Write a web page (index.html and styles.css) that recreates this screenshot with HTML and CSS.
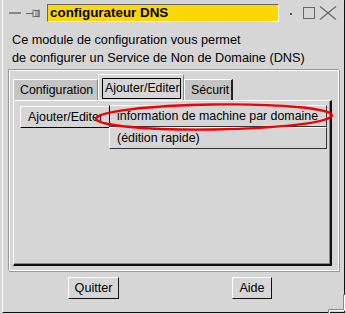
FILE: index.html
```html
<!DOCTYPE html>
<html lang="fr">

<head>
    <meta charset="UTF-8">
    <title>configurateur DNS</title>
    <link rel="stylesheet" href="styles.css">
</head>

<body>
    <div class="window">
        <div class="titlebar">
            <span class="tb-min"></span>
            <svg class="tb-pin" width="16" height="10" viewBox="0 0 16 10">
                <path d="M0 5.5h7M7 1.5v8M8 2.5h5v6h-5M13 1.5v8" stroke="#666" stroke-width="1" fill="none"/>
                <rect x="9" y="3" width="3" height="5" fill="#aaa"/>
            </svg>
            <div class="title">configurateur DNS</div>
            <span class="tb-dot"></span>
            <span class="tb-max"></span>
            <svg class="tb-close" width="18" height="14" viewBox="0 0 18 14">
                <path d="M1 0.5l16 13M17 0.5l-16 13" stroke="#666" stroke-width="1.2" fill="none"/>
            </svg>
        </div>

        <div class="intro">
            Ce module de configuration vous permet<br>
            de configurer un Service de Non de Domaine (DNS)
        </div>

        <div class="frame">
            <div class="tabs">
                <div class="tab first">Configuration</div>
                <div class="tab active"><span class="focus">Ajouter/Editer</span></div>
                <div class="tab last">Sécurit</div>
            </div>
            <div class="panel">
                <div class="menubtn">Ajouter/Editer</div>
            </div>
        </div>

        <div class="actions">
            <button class="btn quit">Quitter</button>
            <button class="btn help">Aide</button>
        </div>

        <div class="popup">
            <div class="item">information de machine par domaine</div>
            <div class="item">(édition rapide)</div>
        </div>

        <svg class="circle" width="244" height="34" viewBox="0 0 244 34">
            <ellipse cx="122" cy="17" rx="118" ry="12.5" transform="rotate(-0.8 122 17)" fill="none" stroke="#f00000" stroke-width="2.4"/>
        </svg>

        <svg class="grip" width="20" height="20" viewBox="0 0 20 20">
            <path d="M2.5 20v-3.5h15v-15h3" stroke="#888" stroke-width="1" fill="none"/>
            <path d="M3.5 20v-2.5h15v-15h2" stroke="#fff" stroke-width="1" fill="none"/>
        </svg>
    </div>
</body>

</html>
```

FILE: styles.css
```css
body {
    margin: 0;
    font-family: 'Liberation Sans', Arial, sans-serif;
    font-size: 12px;
    color: #000;
    background-color: #d6d6d6;
}

.window {
    position: relative;
    box-sizing: border-box;
    width: 343px;
    height: 313px;
    margin-left: 2px;
    background-color: #d6d6d6;
    border-left: 1px solid #fff;
    border-right: 1px solid #111;
    border-bottom: 1px solid #111;
}

.titlebar {
    display: flex;
    align-items: center;
    height: 26px;
}

.tb-min {
    width: 12px;
    height: 2px;
    margin-left: 6px;
    background-color: #888;
}

.tb-pin {
    margin-left: 5px;
}

.title {
    box-sizing: border-box;
    width: 232px;
    height: 18px;
    margin-left: 5px;
    padding-left: 2px;
    background-color: #ffd700;
    border-top: 1px solid #666;
    border-left: 1px solid #666;
    border-right: 1px solid #fff;
    border-bottom: 1px solid #fff;
    font-weight: bold;
    font-size: 13.4px;
    line-height: 16px;
}

.tb-dot {
    width: 2px;
    height: 2px;
    margin-left: 11px;
    margin-top: 2px;
    background-color: #555;
}

.tb-max {
    box-sizing: border-box;
    width: 12px;
    height: 12px;
    margin-left: 11px;
    border: 1px solid #666;
}

.tb-close {
    margin-left: 4px;
}

.intro {
    padding: 5px 0 0 9px;
    font-size: 12.7px;
    line-height: 18px;
    height: 38px;
}

.frame {
    box-sizing: border-box;
    width: 331px;
    height: 202px;
    margin-left: 5px;
    padding: 4px 0 0 4px;
    border-top: 1px solid #999;
    border-left: 1px solid #999;
    border-right: 1px solid #fff;
    border-bottom: 1px solid #fff;
    box-shadow: inset 1px 1px 0 #fff, 1px 1px 0 #999;
}

.tabs {
    display: flex;
    align-items: flex-end;
    height: 26px;
}

.tab {
    box-sizing: border-box;
    height: 21px;
    padding-left: 6px;
    background-color: #c4c4c4;
    border-top: 1px solid #fff;
    border-left: 1px solid #fff;
    border-right: 1px solid #888;
    line-height: 21px;
    font-size: 12.3px;
    white-space: nowrap;
}

.tab.first {
    width: 85px;
}

.tab.active {
    width: 86px;
    height: 26px;
    padding: 3px 2px 0 3px;
    background-color: #d6d6d6;
}

.tab.active .focus {
    display: block;
    height: 19px;
    padding-left: 2px;
    border: 1px solid #000;
    line-height: 18px;
}

.tab.last {
    width: 49px;
    border-right: 2px solid #222;
    padding-left: 6px;
}

.panel {
    box-sizing: border-box;
    width: 319px;
    height: 166px;
    padding: 5px 0 0 6px;
    border-top: 1px solid #fff;
    border-left: 1px solid #fff;
    border-right: 2px solid #111;
    border-bottom: 2px solid #111;
    box-shadow: inset -1px -1px 0 #888;
}

.menubtn {
    box-sizing: border-box;
    width: 90px;
    height: 22px;
    padding-left: 7px;
    border-top: 1px solid #fff;
    border-left: 1px solid #fff;
    border-bottom: 1px solid #000;
    line-height: 20px;
    font-size: 12.4px;
    white-space: nowrap;
    overflow: hidden;
}

.actions {
    display: flex;
    padding-top: 6px;
}

.btn {
    box-sizing: border-box;
    height: 22px;
    padding: 0;
    background-color: #d6d6d6;
    border: 1px solid;
    border-color: #fff #111 #111 #fff;
    font-family: inherit;
    font-size: 12.6px;
}

.quit {
    width: 51px;
    margin-left: 65px;
}

.help {
    width: 40px;
    margin-left: 113px;
}

.popup {
    position: absolute;
    left: 106px;
    top: 105px;
    width: 218px;
}

.item {
    box-sizing: border-box;
    height: 22px;
    padding-left: 7px;
    background-color: #d6d6d6;
    border: 1px solid;
    border-color: #fff #333 #333 #fff;
    line-height: 20px;
    font-size: 12.4px;
    white-space: nowrap;
}

.item:first-child {
    border-left-color: #000;
}

.circle {
    position: absolute;
    left: 89px;
    top: 100px;
}

.grip {
    position: absolute;
    right: -2px;
    bottom: -1px;
}
```
